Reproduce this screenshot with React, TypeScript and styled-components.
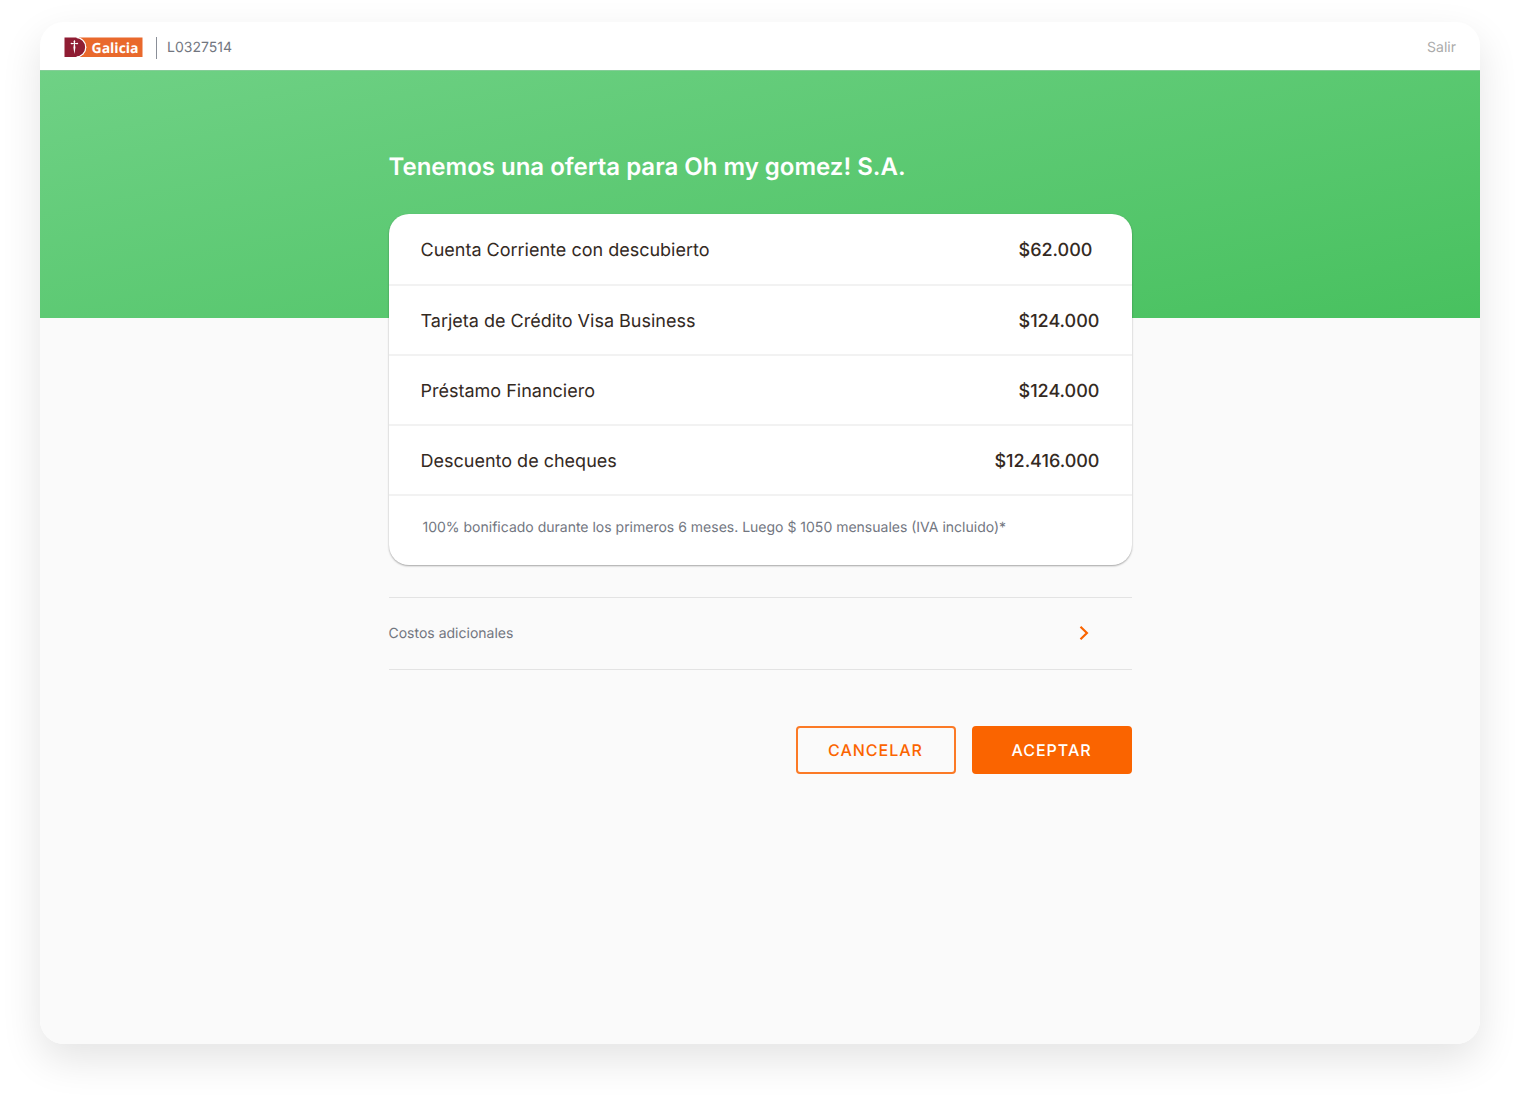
import React from "react";
import styled, { createGlobalStyle } from "styled-components";

const GlobalStyle = createGlobalStyle`
  *, *::before, *::after { box-sizing: border-box; }
  body {
    margin: 0;
    background: #ffffff;
    font-family: Inter, "Liberation Sans", sans-serif;
    text-rendering: geometricPrecision;
  }
  button { font-family: inherit; text-rendering: inherit; cursor: pointer; }
`;

const Page = styled.div`
  display: flex;
  min-height: 100vh;
  padding: 22px 40px 60px;
`;

const Shell = styled.div`
  flex: 1;
  display: flex;
  flex-direction: column;
  overflow: hidden;
  border-radius: 24px;
  background: #fafafa;
`;

const ShellShadow = styled.div`
  flex: 1;
  display: flex;
  border-radius: 24px;
  box-shadow: 0 16px 40px rgba(0, 0, 0, 0.11);
`;

const Header = styled.header`
  display: flex;
  align-items: center;
  justify-content: space-between;
  height: 48px;
  padding: 4px 24px 0;
  background: #ffffff;
`;

const Brand = styled.div`
  display: flex;
  align-items: center;
  gap: 10px;
`;

const LogoMark = styled.svg`
  display: block;
  margin-right: 3px;
`;

const Divider = styled.span`
  width: 1px;
  height: 22px;
  background: #8a8f98;
`;

const UserId = styled.span`
  font-size: 14px;
  line-height: 20px;
  color: #72767f;
`;

const ExitLink = styled.a`
  font-size: 14px;
  line-height: 20px;
  color: #aaaaaa;
  text-decoration: none;
`;

const Hero = styled.div`
  padding: 80px 24px 136px;
  border-top: 1px solid #85cd98;
  background: linear-gradient(168deg, #6fd185 0%, #48c15f 100%);
`;

const Column = styled.div`
  width: 100%;
  max-width: 743px;
  margin: 0 auto;
`;

const Title = styled.h1`
  margin: 0;
  font-size: 24px;
  line-height: 31px;
  font-weight: 600;
  color: #ffffff;
`;

const Content = styled.main`
  margin-top: -104px;
  padding: 0 24px 40px;
`;

const Card = styled.section`
  border-radius: 20px;
  background: #ffffff;
  box-shadow: 0 1px 2px rgba(0, 0, 0, 0.35);
`;

const Offers = styled.ul`
  margin: 0;
  padding: 0;
  list-style: none;
`;

const Offer = styled.li`
  display: flex;
  align-items: center;
  justify-content: space-between;
  height: 70px;
  padding: 4px 32px 0;
  border-bottom: 2px solid #f2f2f2;
  font-size: 18px;
  line-height: 24px;
  color: #342a1f;

  &:first-child { height: 72px; }
`;

const Amount = styled.span`
  min-width: 81px;
  font-weight: 500;
`;

const Note = styled.p`
  margin: 0;
  padding: 22px 34px 27px;
  font-size: 14px;
  line-height: 20px;
  color: #72767f;
`;

const CostsButton = styled.button`
  display: flex;
  align-items: center;
  justify-content: space-between;
  width: 100%;
  height: 73px;
  margin-top: 32px;
  padding: 0 42px 0 0;
  border: solid #e3e3e3;
  border-width: 1px 0;
  background: transparent;
  font-size: 14px;
  line-height: 20px;
  color: #72767f;
`;

const Actions = styled.div`
  display: flex;
  justify-content: flex-end;
  gap: 16px;
  margin-top: 56px;
`;

const ActionButton = styled.button<{ $primary?: boolean }>`
  width: 160px;
  height: 48px;
  padding: 0;
  border: 2px solid ${(p) => (p.$primary ? "#fa6400" : "#fb7a26")};
  border-radius: 4px;
  background: ${(p) => (p.$primary ? "#fa6400" : "transparent")};
  font-size: 16px;
  line-height: 24px;
  font-weight: 500;
  letter-spacing: 1px;
  color: ${(p) => (p.$primary ? "#ffffff" : "#fa6400")};
`;

const offers = [
  { name: "Cuenta Corriente con descubierto", amount: "$62.000" },
  { name: "Tarjeta de Crédito Visa Business", amount: "$124.000" },
  { name: "Préstamo Financiero", amount: "$124.000" },
  { name: "Descuento de cheques", amount: "$12.416.000" },
];

function Logo() {
  return (
    <LogoMark width="79" height="22" viewBox="0 0 79 22" role="img" aria-label="Galicia">
      <rect x="15" y="0.5" width="63.5" height="19.5" fill="#e9692c" />
      <path d="M0.5 0.5H12.5A9.75 9.75 0 0 1 12.5 20H0.5Z" fill="#ffffff" />
      <path d="M12 0.5A9.75 9.75 0 0 1 12 20" fill="#8f1d33" stroke="#ffffff" strokeWidth="1.2" />
      <rect x="0.5" y="0.5" width="12" height="19.5" fill="#8f1d33" />
      <path
        d="M10.4 2.9L11.3 4.2L10.9 6.2L13.6 5.8L14.3 6.6L13.6 7.3L10.9 7L11.4 10.5L10.4 17L9.4 10.5L9.9 7L7.2 7.3L6.5 6.6L7.2 5.8L9.9 6.2L9.5 4.2Z"
        fill="#ffffff"
      />
      <text
        x="27.5"
        y="15.5"
        fontFamily='"Open Sans", "Noto Sans", sans-serif'
        fontSize="14"
        fontWeight="700"
        fill="#ffffff"
      >
        Galicia
      </text>
    </LogoMark>
  );
}

function Chevron() {
  return (
    <svg width="12" height="18" viewBox="0 0 12 18" fill="none" aria-hidden="true">
      <path d="M2.5 1.8L8.9 8L2.5 14.2" stroke="#fa6400" strokeWidth="2.2" />
    </svg>
  );
}

export default function App() {
  return (
    <>
      <GlobalStyle />
      <Page>
        <ShellShadow>
          <Shell>
            <Header>
              <Brand>
                <Logo />
                <Divider />
                <UserId>L0327514</UserId>
              </Brand>
              <ExitLink href="#salir">Salir</ExitLink>
            </Header>
            <Hero>
              <Column>
                <Title>Tenemos una oferta para Oh my gomez! S.A.</Title>
              </Column>
            </Hero>
            <Content>
              <Column>
                <Card>
                  <Offers>
                    {offers.map((offer) => (
                      <Offer key={offer.name}>
                        <span>{offer.name}</span>
                        <Amount>{offer.amount}</Amount>
                      </Offer>
                    ))}
                  </Offers>
                  <Note>
                    100% bonificado durante los primeros 6 meses. Luego $ 1050 mensuales (IVA incluido)*
                  </Note>
                </Card>
                <CostsButton type="button">
                  <span>Costos adicionales</span>
                  <Chevron />
                </CostsButton>
                <Actions>
                  <ActionButton type="button">CANCELAR</ActionButton>
                  <ActionButton type="button" $primary>
                    ACEPTAR
                  </ActionButton>
                </Actions>
              </Column>
            </Content>
          </Shell>
        </ShellShadow>
      </Page>
    </>
  );
}
